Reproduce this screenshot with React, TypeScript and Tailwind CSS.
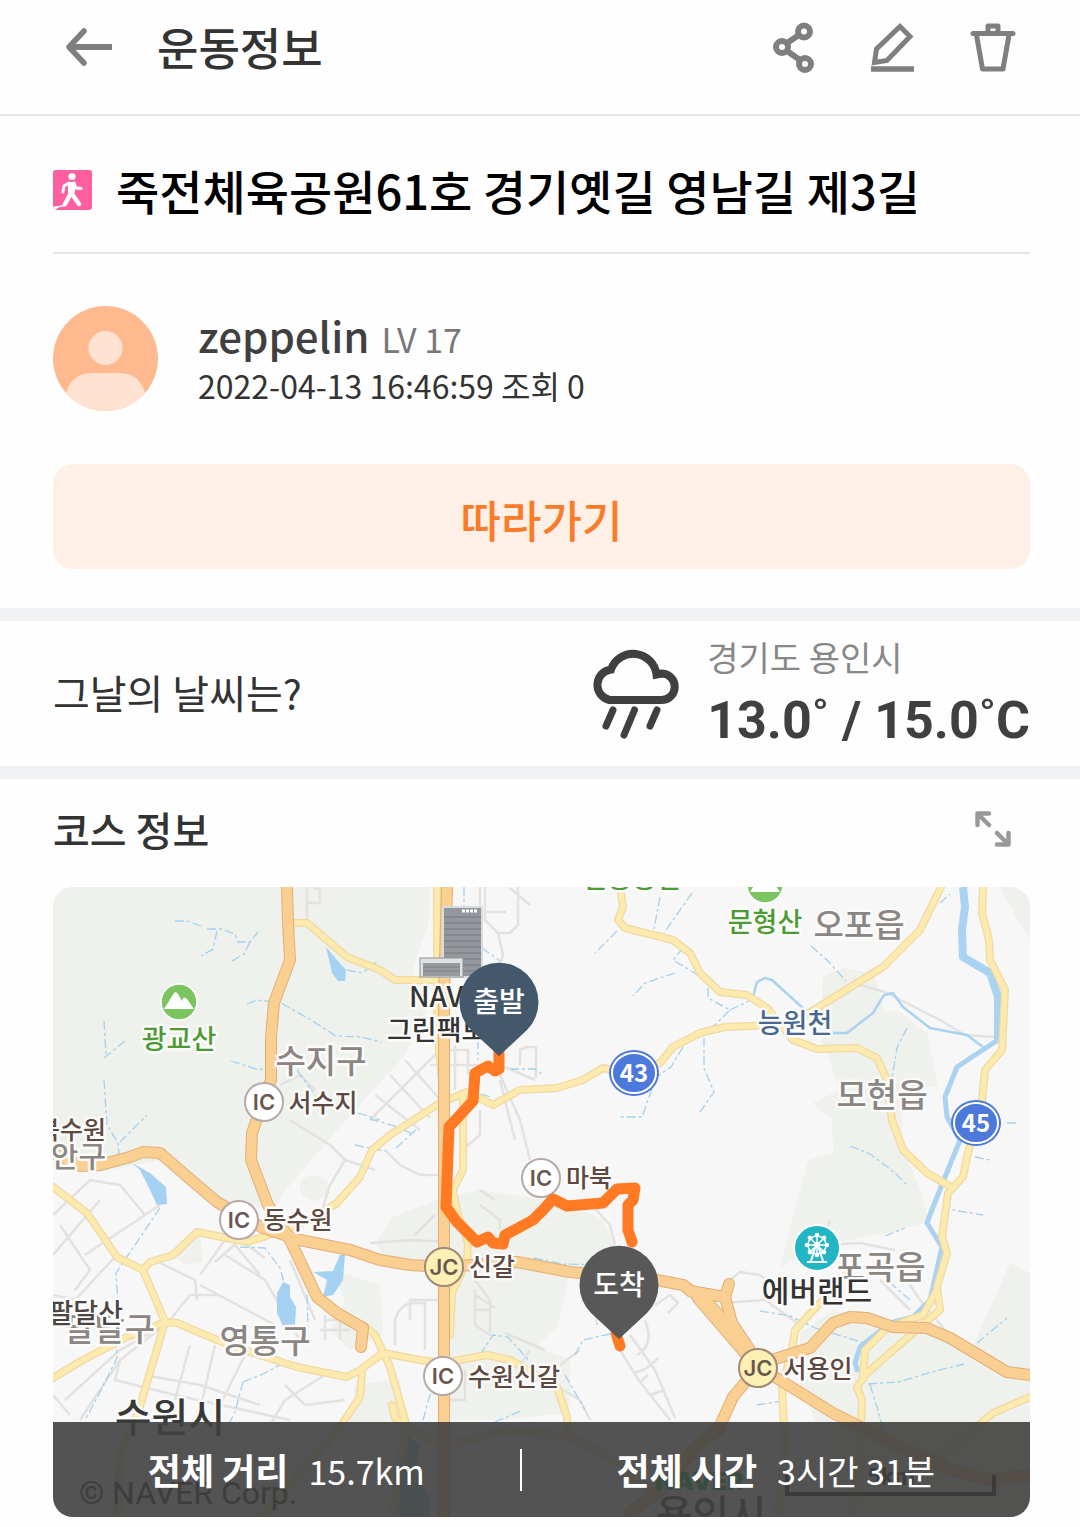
import React from "react";

const KR = "font-['Noto_Sans_CJK_KR',sans-serif]";

const areas = [
  "M53 887H430L428 925 412 972 432 1000 405 1055 380 1083 340 1127 283 1193 275 1210 220 1200 160 1160 100 1172 53 1172Z",
  "M823 977 843 968 873 973 885 1013 897 1010 927 1033 938 1087 900 1087 903 1147 923 1197 928 1222 887 1233 833 1243 780 1267 795 1210 808 1160 833 1153 832 1120 813 1103 840 1090 820 1035Z",
  "M800 1333 833 1310 887 1333 947 1330 970 1353 1010 1263 1030 1273V1517H860L800 1387Z",
  "M1000 887H1030V940L1015 915Z",
  "M377 1240 393 1217 437 1200 480 1190 570 1203 603 1220 617 1250 570 1273 557 1327 537 1347 570 1360 570 1413 497 1420 450 1420 452 1267 383 1263Z",
  "M333 1270 380 1285 383 1335 350 1350 330 1330 345 1300Z",
  "M175 1255 200 1233 203 1262 185 1265Z",
  "M300 1183a14 14 0 1 0 28 6a14 10 0 1 0-28-6Z",
  "M355 1385 400 1378 403 1425H350Z",
];

const streets = [
  "M307 887V920M308 903h12V890L313 887M480 887V915M484 912h22M518 887V925L510 933H498L503 955 497 975M498 933 485 920V887M510 888 530 905",
  "M440 1050H468V1075M455 1020V1090M370 1120 440 1050M375 1095 420 1130M390 1075 430 1118M405 1060 445 1105M480 1110V1135L462 1150M500 1075 520 1120 530 1160",
  "M430 1065H500L535 1080M520 1065V1050L527 1047H536V1078M385 1150 400 1165 420 1175H440M500 1080 515 1140M280 1085 300 1075 315 1090M290 1120 330 1145 345 1160 375 1170M345 1160 330 1185 322 1210",
  "M53 1215 90 1180 120 1185 145 1215M53 1255 100 1200M60 1225 90 1270 75 1290M85 1255 160 1205M115 1257 75 1300 53 1295M65 1400 120 1350 165 1325M53 1395 70 1415",
  "M158 1262 195 1280 197 1300M200 1275 225 1240M225 1255 265 1280 300 1340M235 1245 260 1275M215 1262 240 1240 265 1258M200 1285 275 1325M170 1320 190 1295H220",
  "M165 1325 120 1360 115 1380 175 1395 290 1420M145 1375 200 1385 260 1405M190 1345 175 1400M215 1345 200 1410M245 1355 215 1415M120 1360 80 1420M325 1375 285 1400 270 1425M285 1385 305 1405 345 1400",
  "M325 1320H350M320 1330H350M325 1315V1340M340 1317V1340M290 1260 315 1320M370 1243 410 1240 450 1242M410 1320V1300H450M395 1345V1320Q400 1303 415 1303H425V1350",
  "M475 1290V1325L490 1335V1300L475 1280 480 1265M475 1310H490M475 1295 495 1308M480 1205 500 1220 500 1230M495 1200 480 1190M590 1203 610 1225 615 1245",
  "M597 1325 595 1300M620 1350 640 1382 670 1420M630 1335 655 1370 675 1418M640 1382 648 1375M650 1395 665 1390M645 1320Q655 1345 637 1355M658 1358Q645 1372 635 1372M655 1305 670 1295 678 1303 668 1313",
  "M560 1365 580 1350M555 1385 580 1400 590 1420M730 1280 740 1272 760 1275 780 1290M725 1303 765 1300 800 1325M825 1245 860 1243 895 1250M880 1280 910 1310M860 985 885 992 940 1020 965 1035 995 1037",
  "M450 1400h15V1370M415 1235 435 1215M530 1350 520 1365M900 1270 920 1300 945 1330M830 1220 825 1235M505 1333 545 1350",
];

const brooks = [
  "M175 921h12l14 5M207 929h14l14 5 3 8h12l8-10M217 931l-4 18-12 7M250 942l-6 12-12 7M104 1021l2 34M104 1058l22-18M104 1080l3 45 11 18 1 12M120 1142l27-27",
  "M247 1004l10-4 24 3 30 17 25 16 25 1 20 5M231 1061l25 8 15 1M297 1070l18 25M347 970l15 3 16-12M355 1145l30 6M358 1113l22 7",
  "M464 887v22M482 948l18 13M478 1040v20M510 1069h25l8 6M481 1094l10 3M370 1119l25 7 18 8M396 1148l22-20",
  "M660 897l-6 32M692 893l-28 40M617 931l-22 22M683 948l-10 12 25 15M675 973l-30 10-12 13M683 1047l-12 20-15 10-14 40-24 0",
  "M708 988v10l22 12-17 17M730 1010l23-11M811 946l17 15 18 20M940 903l10-9M907 1028l-10 20-5 30M704 1038v30l10 24-14 20M850 1146l20 8 24 18 12 12",
  "M160 1208l-44 65 2 30-3 25 2 30-20 40-12 22M240 1247l25 1 15 20 5 18M307 1295l1 32M243 1382l-8 30-5 10M243 1382l20-8 30-16",
  "M480 1355l13-20 15 2 22 25M423 1420l7-25 15-25M495 1422l28-12M534 1258l30 6 35 1M565 1375l20 35M575 1355l8-15 27-6M760 1311l30 5 25 12M815 1328l50 15",
  "M868 1384l30-2 34-10 32-8M977 1343l30-25M910 1300l-35-30M885 1236l20-8M945 1200l8 10 30 5M870 1385l8 25 5 20M975 1157l15 3M1007 1123h10M757 1405l25-4",
];

const yellowRoads = [
  "M292 923H307L347 957 380 970 395 980H433",
  "M437 887V1030L445 1110",
  "M263 1237 310 1220 337 1203 360 1177 372 1150 390 1135 440 1103 467 1092 493 1105 520 1090 557 1088 583 1080 603 1068 630 1073 660 1063 673 1047 700 1033 725 1027 780 1025",
  "M463 1097V1170L453 1190 457 1212 468 1243 467 1260 452 1293 450 1335",
  "M620 887 623 907 618 920 625 928 673 940 690 953 700 973 720 992 747 995 767 1008 793 1040 817 1049 857 1048 877 1058 887 1080 892 1120 903 1150 927 1173 953 1188",
  "M941 887 920 930 883 967 817 1008 790 1025",
  "M983 887 982 913 989 940 990 960 1005 990 1002 1050 985 1070 982 1100 967 1157 963 1177 948 1193 942 1237 947 1253 937 1287 940 1310 913 1333 867 1373 857 1387 862 1400 859 1473 850 1517",
  "M937 1290 923 1315 887 1328 865 1350 863 1375",
  "M850 1270 820 1303 795 1330 792 1350 782 1387 785 1447 778 1517",
  "M1030 1397 993 1413 933 1463",
  "M53 1187 87 1213 117 1257 143 1270 165 1322 138 1413 120 1453 118 1517",
  "M143 1270 150 1262 173 1255 197 1232 247 1242 263 1237",
  "M53 1378 83 1360 127 1337 165 1322 177 1323 217 1340 250 1352 297 1367 347 1377 360 1370 383 1353 420 1360 443 1363 487 1355 510 1360 557 1387 567 1417 568 1433",
  "M363 1325 375 1335 390 1367 407 1427 400 1460 393 1517",
  "M392 1405 395 1418 405 1425 443 1447 503 1430 570 1437 620 1463 650 1490",
  "M362 1373 360 1397 340 1427 283 1493 260 1517",
];

const highways = [
  "M287 887 288 923 290 960 274 1003 271 1037V1080L252 1133 251 1160 268 1205 290 1240",
  "M53 1153 80 1166 100 1165 130 1157 143 1152 160 1153 183 1173 217 1202 263 1228 300 1240 350 1250 380 1260 410 1265 443 1267 517 1262 570 1272 657 1280 683 1285 700 1297 743 1350 758 1367 780 1380 833 1413 900 1447 950 1470 990 1480 1030 1475",
  "M690 1291 725 1297 729 1284M725 1297 732 1323 750 1350",
  "M758 1365 778 1358 810 1348 833 1323 850 1317 867 1318 893 1327 927 1328 950 1338 1007 1372 1030 1375",
  "M758 1367 733 1397 718 1430 700 1443 660 1490 630 1513",
  "M290 1240 317 1297 337 1313 363 1328 361 1347",
  "M447 887 444 1000V1517",
];

const route =
  "M499 1052V1069L495 1071 488 1066 475 1073 473 1101 449 1127 446 1207 457 1222 477 1242 488 1237 493 1243 503 1244 505 1235 533 1220 543 1210 553 1199 567 1206 603 1203 617 1189 635 1188 633 1200 628 1205V1230L632 1242M616 1333 620 1346";

type Label = { t: string; x: number; y: number; s: number; c: string; a?: "start" | "middle" | "end" };
const GRAY = "#8b8583";
const BROWN = "#5d4842";
const labels: Label[] = [
  { t: "신봉동산", x: 632, y: 888, s: 27, c: "#4c9a34" },
  { t: "문형산", x: 765, y: 932, s: 27, c: "#4c9a34" },
  { t: "오포읍", x: 859, y: 937, s: 33, c: GRAY },
  { t: "광교산", x: 179, y: 1049, s: 27, c: "#4c9a34" },
  { t: "수지구", x: 321, y: 1073, s: 33, c: GRAY },
  { t: "서수지", x: 323, y: 1112, s: 25, c: BROWN },
  { t: "장안구", x: 106, y: 1167, s: 30, c: GRAY, a: "end" },
  { t: "북수원", x: 106, y: 1139, s: 25, c: BROWN, a: "end" },
  { t: "NAVER", x: 409, y: 1007, s: 28, c: "#333333", a: "start" },
  { t: "그린팩토리", x: 387, y: 1040, s: 27, c: "#333333", a: "start" },
  { t: "능원천", x: 795, y: 1033, s: 27, c: "#48688f" },
  { t: "모현읍", x: 882, y: 1107, s: 33, c: GRAY },
  { t: "마북", x: 589, y: 1187, s: 25, c: BROWN },
  { t: "동수원", x: 298, y: 1229, s: 25, c: BROWN },
  { t: "팔달구", x: 155, y: 1341, s: 33, c: GRAY, a: "end" },
  { t: "팔달산", x: 123, y: 1323, s: 27, c: "#4a4542", a: "end" },
  { t: "영통구", x: 265, y: 1353, s: 33, c: GRAY },
  { t: "신갈", x: 492, y: 1276, s: 25, c: BROWN },
  { t: "수원신갈", x: 514, y: 1386, s: 25, c: BROWN },
  { t: "포곡읍", x: 880, y: 1279, s: 33, c: GRAY },
  { t: "에버랜드", x: 817, y: 1302, s: 30, c: "#333333" },
  { t: "서용인", x: 818, y: 1378, s: 25, c: BROWN },
  { t: "수원시", x: 170, y: 1432, s: 40, c: "#383838" },
  { t: "용인시", x: 711, y: 1529, s: 40, c: "#383838" },
];

function Junction({ x, y, t }: { x: number; y: number; t: string }) {
  return (
    <g>
      <circle cx={x} cy={y} r="19" fill={t === "JC" ? "#fdf0b4" : "#ffffff"} stroke={t === "JC" ? "#a08a78" : "#b5aaa6"} strokeWidth="2" />
      <text x={x} y={y + 8} textAnchor="middle" className="font-[Inter,sans-serif] text-[22px] font-semibold" fill="#6a5750">{t}</text>
    </g>
  );
}

function RouteShield({ x, y, t }: { x: number; y: number; t: string }) {
  return (
    <g>
      <ellipse cx={x} cy={y} rx="25" ry="23" fill="#4d78dc" />
      <ellipse cx={x} cy={y} rx="22" ry="20" fill="none" stroke="#fff" strokeWidth="2" />
      <text x={x} y={y + 9} textAnchor="middle" className="font-['Noto_Sans_CJK_KR',sans-serif] text-[24px] font-bold" fill="#fff">{t}</text>
    </g>
  );
}

function Mountain({ x, y }: { x: number; y: number }) {
  return (
    <g transform={`translate(${x} ${y})`}>
      <circle r="18" fill="#7cc460" stroke="#fff" strokeWidth="1.5" />
      <path d="M-15 7-5-9Q-3-11-1-8L3-1 4-4Q6-5 8-3L15 7Z" fill="#fff" />
    </g>
  );
}

function Pin({ x, y, t, fill }: { x: number; y: number; t: string; fill: string }) {
  return (
    <g>
      <path transform={`translate(${x} ${y})`} d="M0 54 -28 28A39.500 39.500 0 1 1 28 28Z" fill={fill} />
      <text x={x} y={y + 10} textAnchor="middle" className="font-['Noto_Sans_CJK_KR',sans-serif] text-[28px] font-medium" fill="#fff">{t}</text>
    </g>
  );
}

function CourseMap() {
  const spokes = [0, 45, 90, 135, 180, 225, 270, 315];
  return (
    <svg viewBox="53 887 977 630" className="block w-full" role="img" aria-label="코스 지도">
      <rect x="53" y="887" width="977" height="630" fill="#f7f7f7" />
      {areas.map((d) => <path key={d} d={d} fill="#eef1ec" />)}
      <g fill="none" stroke="#e4e2e0" strokeWidth="2.500" strokeLinejoin="round">
        {streets.map((d) => <path key={d} d={d} />)}
      </g>
      <g fill="none" stroke="#a5d0ee" strokeWidth="1.300" strokeDasharray="9 3 3 3">
        {brooks.map((d) => <path key={d} d={d} />)}
      </g>
      <g fill="#a5d2f3">
        <path d="M326 947 332 973 338 981H345L346 970 337 960Z" />
        <path d="M132 1163 140 1170 150 1190 157 1205 167 1204 166 1187 150 1173Z" />
        <path d="M283 1282 277 1293V1313L283 1326 295 1325 296 1307 290 1297V1285Z" />
        <path d="M313 1272 327 1280 323 1297 333 1295 343 1280 345 1255 340 1255 333 1271Z" />
        <path d="M405 1430 420 1445 415 1470 430 1500V1517H398L402 1470Z" />
      </g>
      <g fill="none" stroke="#a9d3f0" strokeLinejoin="round">
        <path strokeWidth="8" d="M963 887 965 907 962 930 963 957 990 973 998 997V1040" />
        <path strokeWidth="5" d="M998 1040 975 1055 957 1067 945 1097 947 1117 960 1140 933 1207 927 1223 942 1247 930 1300 913 1317 890 1323 860 1347 855 1363 858 1372" />
        <path strokeWidth="2.500" d="M833 1033H847L873 1013 884 995 893 993 903 1007 930 1028 967 1035 983 1047M753 997 757 982 765 978 772 980 805 1010" />
      </g>
      <g fill="none" strokeLinejoin="round" strokeLinecap="round">
        {yellowRoads.map((d) => <path key={d} d={d} stroke="#f0d9a2" strokeWidth="8" />)}
        {yellowRoads.map((d) => <path key={d} d={d} stroke="#fdeaae" strokeWidth="5.500" />)}
        {highways.map((d) => <path key={d} d={d} stroke="#e2ae78" strokeWidth="12" />)}
        <path d="M700 1297 750 1355" stroke="#e2ae78" strokeWidth="17" />
        {highways.map((d) => <path key={d} d={d} stroke="#f9cf92" strokeWidth="10" />)}
        <path d="M700 1297 750 1355" stroke="#f9cf92" strokeWidth="15" />
      </g>
      <g>
        <rect x="442" y="906" width="41" height="72" fill="#dadcde" />
        <rect x="444" y="908" width="37" height="68" fill="#94979b" />
        <path d="M444 917h37M444 923h37M444 929h37M444 935h37M444 941h37M444 947h37M444 953h37M444 959h37M444 965h37M444 971h37" stroke="#7f8286" strokeWidth="1.500" />
        <path d="M462 911h16" stroke="#fff" strokeWidth="3" strokeDasharray="3 1" />
        <rect x="420" y="958" width="43" height="19" fill="#dfe1e3" stroke="#8f9296" />
        <path d="M423 963h37v13h-37Z" fill="#979a9e" />
        <path d="M423 967h37M423 971h37" stroke="#7f8286" />
      </g>
      <g className="font-['Noto_Sans_CJK_KR',sans-serif] font-medium" stroke="#fbfbfa" strokeWidth="5" strokeLinejoin="round" paintOrder="stroke">
        {labels.map((l) => (
          <text key={l.t} x={l.x} y={l.y} fontSize={l.s} fill={l.c} textAnchor={l.a ?? "middle"}>{l.t}</text>
        ))}
      </g>
      <Junction x={264} y={1102} t="IC" />
      <Junction x={239} y={1220} t="IC" />
      <Junction x={541} y={1178} t="IC" />
      <Junction x={444} y={1267} t="JC" />
      <Junction x={443} y={1376} t="IC" />
      <Junction x={758} y={1368} t="JC" />
      <RouteShield x={634} y={1073} t="43" />
      <RouteShield x={976} y={1123} t="45" />
      <Mountain x={179} y={1002} />
      <Mountain x={765} y={885} />
      <g transform="translate(817 1248)">
        <circle r="23" fill="#22b5c6" stroke="#fff" strokeWidth="2" />
        <g stroke="#fff" fill="none" strokeWidth="1.500">
          <circle cy="-3" r="9" />
          {spokes.map((a) => (
            <g key={a} transform={`rotate(${a} 0 -3)`}>
              <path d="M0-3V-12" />
              <circle cy="-13" r="1.500" fill="#fff" />
            </g>
          ))}
          <path d="M-1-3-6 13M1-3 6 13M-10 14H10" strokeWidth="2" />
        </g>
        <circle cy="-3" r="3" fill="#fff" />
      </g>
      <text x="79" y="1504" className="font-[Roboto,sans-serif] text-[32px]" fill="#202020">© NAVER Corp.</text>
      <text x="655" y="1490" className="font-[Inter,sans-serif] text-[25px] font-black" fill="#00b050">NAVER</text>
      <path d="M787 1475V1494H994V1475" fill="none" stroke="#111" strokeWidth="4" />
      <text x="891" y="1485" textAnchor="middle" className="font-[Roboto,sans-serif] text-[24px] font-bold" fill="#222">5km</text>
      <path d={route} fill="none" stroke="#ff7a22" strokeWidth="11" strokeLinejoin="round" strokeLinecap="round" />
      <Pin x={499} y={1002} t="출발" fill="#44586b" />
      <Pin x={619} y={1285} t="도착" fill="#585858" />
    </svg>
  );
}

export default function App() {
  return (
    <div className={`w-full bg-[#fefefe] pb-[10px] text-[#333333] ${KR}`}>
      <header className="flex h-[116px] items-center border-b-2 border-[#e5e5e5] pr-[64px] pb-5 pl-[66px]">
        <button type="button" aria-label="뒤로">
          <svg width="46" height="38" viewBox="0 0 46 38" fill="none" stroke="#7f7f7f">
            <path d="M4 19H46" strokeWidth="6" />
            <path d="M18 3 3 19 18 35" strokeWidth="5.500" strokeLinecap="round" strokeLinejoin="round" />
          </svg>
        </button>
        <h1 className="ml-[45px] flex-1 text-[45px] leading-[60px] font-medium">운동정보</h1>
        <div className="flex items-center gap-[56px]">
          <button type="button" aria-label="공유">
            <svg width="42" height="52" viewBox="0 0 42 52" fill="none" stroke="#7f7f7f" strokeWidth="6">
              <circle cx="9" cy="26" r="6" />
              <circle cx="31" cy="10.500" r="6" />
              <circle cx="32" cy="43" r="6" />
              <path d="M14 22 26 14M14 30 27 39" />
            </svg>
          </button>
          <button type="button" aria-label="수정">
            <svg width="43" height="52" viewBox="0 0 43 52" fill="none" stroke="#7f7f7f" strokeWidth="5">
              <path d="M29 5.500 39 15.500 16 39.500 3.500 41.500 5.500 28Z" />
              <path d="M0 48H43" strokeWidth="5.500" />
            </svg>
          </button>
          <button type="button" aria-label="삭제">
            <svg width="46" height="52" viewBox="0 0 46 52" fill="none" stroke="#7f7f7f" strokeWidth="5" strokeLinejoin="round">
              <path d="M3 12.500H43" strokeLinecap="round" />
              <path d="M18 12V5H28V12" />
              <path d="M6.500 14 12.500 48H33L39 14" />
            </svg>
          </button>
        </div>
      </header>

      <main>
        <section className="pr-[50px] pl-[53px]">
          <div className="flex h-[138px] items-center border-b-2 border-[#e5e5e5] pt-3">
            <svg width="39" height="40" viewBox="0 0 39 40" className="shrink-0" role="img" aria-label="걷기">
              <path d="M3 0H36Q39 0 39 3V37Q39 40 36 40H2L8 36 0 37V3Q0 0 3 0Z" fill="#ff5f9e" />
              <circle cx="19" cy="6.500" r="3.500" fill="#fff" />
              <path d="M18 15 19 24 26 34M18 23 12 34" fill="none" stroke="#fff" strokeWidth="4.500" strokeLinecap="round" strokeLinejoin="round" />
              <path d="M16 13 11 16 10 22M21 13 23 18 28 18.500" fill="none" stroke="#fff" strokeWidth="3" strokeLinecap="round" strokeLinejoin="round" />
              <path d="M15 12h7v11h-7Z" fill="#fff" />
              <path d="M1 37.500 12 35.500" stroke="#fff" strokeWidth="1.500" />
            </svg>
            <h2 className="ml-6 text-[47px] leading-[64px] font-medium text-black">죽전체육공원61호 경기옛길 영남길 제3길</h2>
          </div>

          <div className="mt-[52px] flex items-center">
            <svg width="105" height="105" viewBox="0 0 105 105" className="shrink-0" role="img" aria-label="프로필">
              <clipPath id="avatar"><circle cx="52.500" cy="52.500" r="52.500" /></clipPath>
              <g clipPath="url(#avatar)">
                <rect width="105" height="105" fill="#ffb98f" />
                <circle cx="52.500" cy="42" r="17" fill="#ffe2d1" />
                <path d="M12 105V92Q16 67 40 67H66Q89 67 93 92V105Z" fill="#ffe2d1" />
              </g>
            </svg>
            <div className="ml-10">
              <div className="flex items-baseline gap-3 leading-[48px]">
                <span className="text-[42px] font-medium text-[#404040]">zeppelin</span>
                <span className="text-[34px] text-[#777777]">LV 17</span>
              </div>
              <p className="text-[32px] leading-[44px]">2022-04-13 16:46:59 조회 0</p>
            </div>
          </div>

          <button type="button" className="mt-[53px] mb-[39px] h-[105px] w-full rounded-[20px] bg-[#fff0e7] pt-1 text-[44px] font-medium text-[#f97c2a]">따라가기</button>
        </section>

        <section className="flex h-[171px] items-center border-y-[13px] border-[#f1f2f4] pr-[50px] pl-[53px]">
          <h2 className="flex-1 pb-1 text-[40px] leading-[54px]">그날의 날씨는?</h2>
          <svg width="89" height="90" viewBox="585 649 89 90" fill="none" stroke="#404040" strokeWidth="8" role="img" aria-label="비">
            <path d="M604.500 700A15.500 15.500 0 0 1 606 669.500A23.500 23.500 0 0 1 651.500 674.500L657 673.500A13.200 13.200 0 0 1 656 700Z" />
            <path d="M608 710 601 726M629.500 710 619 735M652 710 645 726" strokeWidth="7" strokeLinecap="round" />
          </svg>
          <div className="ml-7">
            <p className="text-[34px] leading-[54px] text-[#888888]">경기도 용인시</p>
            <p className="font-[Roboto,sans-serif] text-[52px] leading-[74px] font-bold text-[#404040]">13.0˚ / 15.0˚C</p>
          </div>
        </section>

        <section className="pr-[50px] pl-[53px]">
          <div className="flex h-[108px] items-center justify-between pr-[19px] pb-2">
            <h2 className="text-[40px] leading-[54px] font-medium">코스 정보</h2>
            <button type="button" aria-label="지도 확대">
              <svg width="36" height="36" viewBox="0 0 36 36" fill="none" stroke="#999999" strokeWidth="4.500" strokeLinecap="round" strokeLinejoin="round">
                <path d="M14 2.500H2.500V14M3 3 14 14M22 33.500H33.500V22M33 33 22 22" />
              </svg>
            </button>
          </div>
          <div className="relative overflow-hidden rounded-[20px]">
            <CourseMap />
            <div className="absolute inset-x-0 bottom-0 flex h-[95px] items-center justify-evenly bg-[#404040]/90 text-[34px] leading-[50px] text-white">
              <p className="flex items-baseline gap-5">
                <strong className="text-[36px] font-bold">전체 거리</strong>
                <span>15.7km</span>
              </p>
              <div className="h-[42px] w-[2px] bg-white" />
              <p className="flex items-baseline gap-5">
                <strong className="text-[36px] font-bold">전체 시간</strong>
                <span>3시간 31분</span>
              </p>
            </div>
          </div>
        </section>
      </main>
    </div>
  );
}
